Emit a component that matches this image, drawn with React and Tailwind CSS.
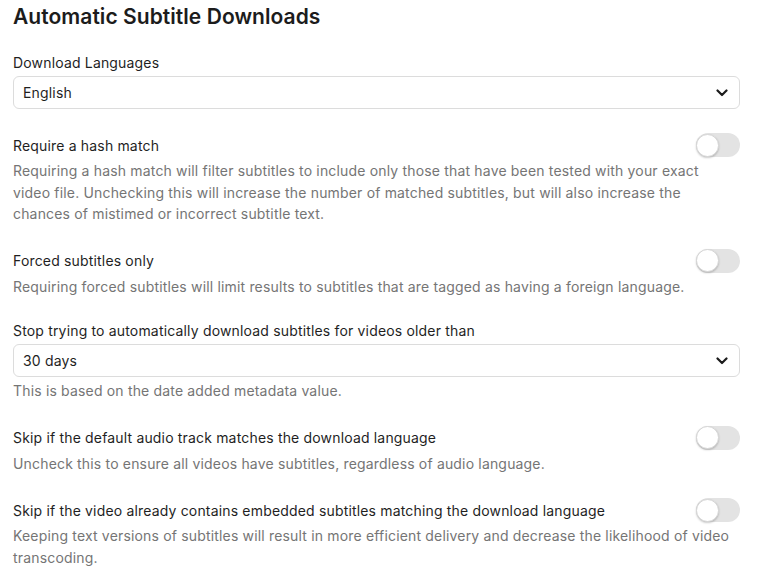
import React from "react";

function Chevron() {
  return (
    <svg width="12" height="8" viewBox="0 0 12 8" fill="none" className="shrink-0">
      <path d="M1.5 1.5 L6 6 L10.5 1.5" stroke="#1c1c1c" strokeWidth="2.2" strokeLinecap="round" strokeLinejoin="round" />
    </svg>
  );
}

function Select({ value }) {
  return (
    <div className="mt-[3px] flex h-[33px] items-center justify-between rounded-[6px] border border-[#dcdcdc] bg-white pl-[9px] pr-[11px] text-[14px] text-[#1f1f1f]">
      <span>{value}</span>
      <Chevron />
    </div>
  );
}

function Toggle() {
  return (
    <div className="relative h-[24px] w-[44px] shrink-0 rounded-full bg-[#e3e3e3]">
      <div className="absolute left-0 top-[0.5px] h-[23px] w-[23px] rounded-full border border-[#d6d6d6] bg-white shadow-[0_1px_2px_rgba(0,0,0,0.2)]" />
    </div>
  );
}

function ToggleRow({ label, desc }) {
  return (
    <div>
      <div className="flex h-[24px] items-center justify-between">
        <span className="text-[14px] text-[#1f1f1f]">{label}</span>
        <Toggle />
      </div>
      <p className="mt-[3px] text-[14px] leading-[21.5px] text-[#757575]">{desc}</p>
    </div>
  );
}

export default function App() {
  return (
    <div
      className="min-h-[581px] bg-white pl-[13px] pr-[19px] pt-[3px] tracking-[0.17px]"
      style={{ fontFamily: "Inter, 'Noto Sans', sans-serif" }}
    >
      <h1 className="text-[21px] font-semibold leading-[28px] tracking-[0.05px] text-[#1c1c1c]">Automatic Subtitle Downloads</h1>
      <div className="mt-[22px] flex flex-col gap-[24px]">
        <div>
          <div className="text-[14px] leading-[20px] text-[#1f1f1f]">Download Languages</div>
          <Select value="English" />
        </div>
        <ToggleRow
          label="Require a hash match"
          desc="Requiring a hash match will filter subtitles to include only those that have been tested with your exact video file. Unchecking this will increase the number of matched subtitles, but will also increase the chances of mistimed or incorrect subtitle text."
        />
        <ToggleRow
          label="Forced subtitles only"
          desc="Requiring forced subtitles will limit results to subtitles that are tagged as having a foreign language."
        />
        <div>
          <div className="text-[14px] leading-[20px] text-[#1f1f1f]">Stop trying to automatically download subtitles for videos older than</div>
          <Select value="30 days" />
          <p className="mt-[3px] text-[14px] leading-[21.5px] text-[#757575]">This is based on the date added metadata value.</p>
        </div>
        <ToggleRow
          label="Skip if the default audio track matches the download language"
          desc="Uncheck this to ensure all videos have subtitles, regardless of audio language."
        />
        <ToggleRow
          label="Skip if the video already contains embedded subtitles matching the download language"
          desc="Keeping text versions of subtitles will result in more efficient delivery and decrease the likelihood of video transcoding."
        />
      </div>
    </div>
  );
}
